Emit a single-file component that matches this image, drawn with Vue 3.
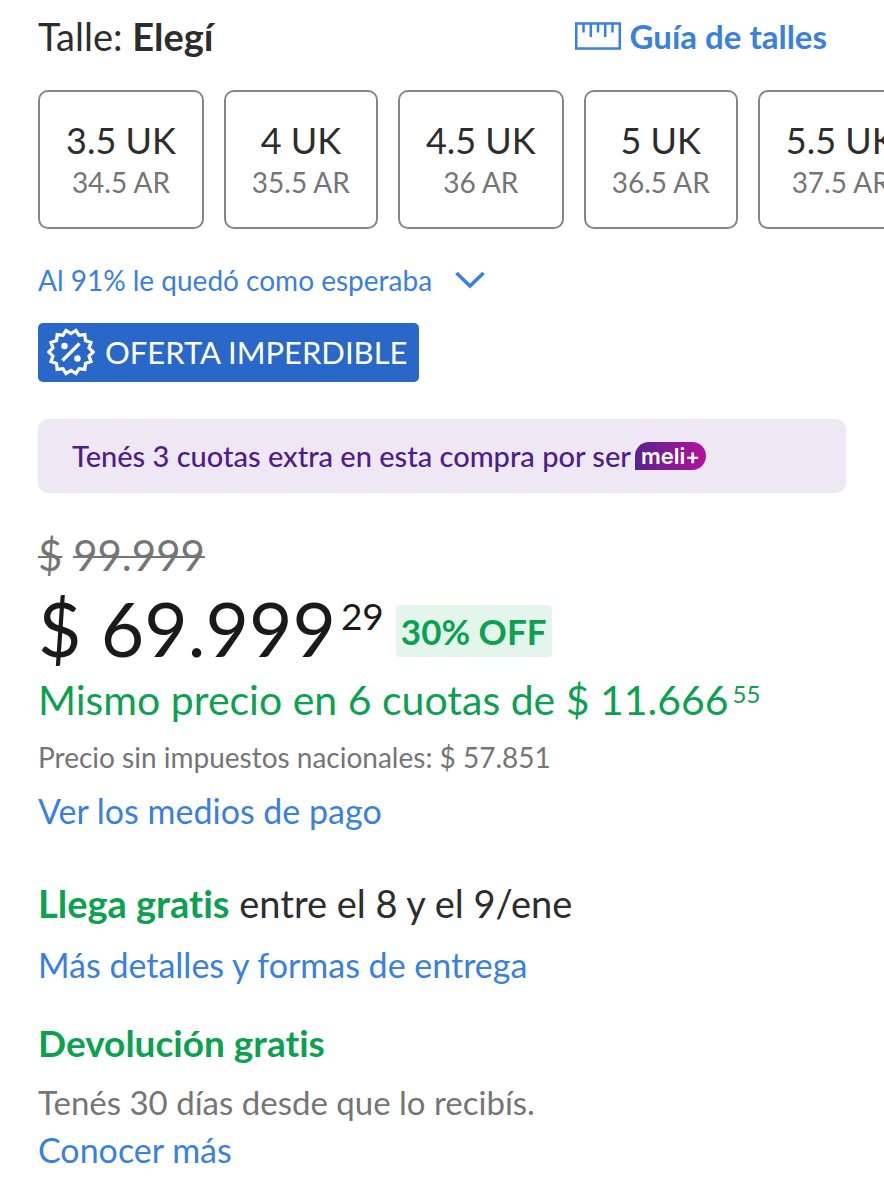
<template>
    <main class="product">
        <header class="size-header">
            <p class="size-title">Talle: <strong>Elegí</strong></p>
            <a class="guide" href="#guia">
                <svg class="guide-icon" viewBox="0 0 46 28" fill="none" stroke="currentColor" stroke-width="2.500" aria-hidden="true">
                    <rect x="1.250" y="1.500" width="43.500" height="25" />
                    <path d="M8.500 2v8.500M15.800 2v13M23 2v8.500M30.200 2v13M37.500 2v8.500" />
                </svg>
                <span>Guía de talles</span>
            </a>
        </header>

        <div class="sizes">
            <button v-for="size in sizes" :key="size.uk" type="button" class="size">
                <span class="size-uk">{{ size.uk }} UK</span>
                <span class="size-ar">{{ size.ar }} AR</span>
            </button>
        </div>

        <button type="button" class="fit">
            <span>Al 91% le quedó como esperaba</span>
            <svg class="fit-icon" viewBox="0 0 30 18" fill="none" stroke="currentColor" stroke-width="3.500" aria-hidden="true">
                <path d="M1.500 2 15 15 28.500 2" />
            </svg>
        </button>

        <div class="deal">
            <svg class="deal-icon" viewBox="0 0 48 48" fill="none" stroke="currentColor" stroke-width="3.200" aria-hidden="true">
                <polygon :points="sealPoints" />
                <path d="M15.500 32.500 32.500 15.500" />
                <circle cx="17.500" cy="18" r="3.200" fill="currentColor" stroke="none" />
                <circle cx="30.500" cy="30.500" r="3.200" fill="currentColor" stroke="none" />
            </svg>
            <span>OFERTA IMPERDIBLE</span>
        </div>

        <p class="banner">
            <span>Tenés 3 cuotas extra en esta compra por ser</span>
            <span class="meli">meli+</span>
        </p>

        <section class="prices">
            <p class="old-price"><s>$</s> <s>99.999</s></p>
            <div class="price-row">
                <p class="price">$ 69.999<span class="cents">29</span></p>
                <span class="discount">30% OFF</span>
            </div>
            <p class="installments">Mismo precio en 6 cuotas de $ 11.666<span class="cents-small">55</span></p>
            <p class="tax">Precio sin impuestos nacionales: $ 57.851</p>
            <a class="link" href="#pagos">Ver los medios de pago</a>
        </section>

        <section class="shipping">
            <p class="shipping-title"><strong>Llega gratis</strong> entre el 8 y el 9/ene</p>
            <a class="link" href="#entrega">Más detalles y formas de entrega</a>
        </section>

        <section class="returns">
            <h2 class="returns-title">Devolución gratis</h2>
            <p class="returns-text">Tenés 30 días desde que lo recibís.</p>
            <a class="link" href="#devolucion">Conocer más</a>
        </section>
    </main>
</template>

<script setup>
const sizes = [
    { uk: '3.5', ar: '34.5' },
    { uk: '4', ar: '35.5' },
    { uk: '4.5', ar: '36' },
    { uk: '5', ar: '36.5' },
    { uk: '5.5', ar: '37.5' }
];

// Seal outline: alternating inner and outer radius around the center
const spikes = 14;
const sealPoints = Array.from({ length: spikes * 2 }, (_, i) => {
    const radius = i % 2 === 0 ? 18.5 : 22.2;
    const angle = (Math.PI / spikes) * i - Math.PI / 2;
    return `${(24 + radius * Math.cos(angle)).toFixed(2)},${(24 + radius * Math.sin(angle)).toFixed(2)}`;
}).join(' ');
</script>

<style>
body {
    margin: 0;
    background: #fff;
}
</style>

<style scoped>
.product {
    box-sizing: border-box;
    padding: 12px 38px 28px;
    overflow: hidden;
    font-family: Lato, "Liberation Sans", sans-serif;
    font-variant-ligatures: none;
    color: #2d2d2d;
}

p,
h2 {
    margin: 0;
}

a {
    color: #3a80dd;
    text-decoration: none;
}

button {
    font-family: inherit;
    background: none;
    cursor: pointer;
}

/* Sizes */
.size-header {
    display: flex;
    justify-content: space-between;
    align-items: center;
    padding-right: 19px;
    font-size: 38px;
    line-height: 48px;
}

.guide {
    display: flex;
    align-items: center;
    gap: 9px;
    font-size: 33px;
    font-weight: 700;
}

.guide-icon {
    width: 46px;
    height: 28px;
}

.sizes {
    display: flex;
    gap: 20px;
    margin-top: 30px;
    margin-right: -38px;
    overflow: hidden;
}

.size {
    display: flex;
    flex-direction: column;
    align-items: center;
    flex-shrink: 0;
    padding: 24px 26px 27px;
    border: 2px solid #858585;
    border-radius: 10px;
    white-space: nowrap;
}

.size-uk {
    font-size: 36px;
    line-height: 48px;
    color: #2d2d2d;
}

.size-ar {
    font-size: 28px;
    line-height: 36px;
    color: #757575;
}

.fit {
    display: flex;
    align-items: center;
    gap: 23px;
    margin-top: 31px;
    padding: 0;
    border: none;
    font-size: 28px;
    line-height: 40px;
    color: #3a80dd;
}

.fit-icon {
    width: 30px;
    height: 18px;
}

/* Promotions */
.deal {
    display: flex;
    align-items: center;
    gap: 10px;
    width: fit-content;
    margin-top: 23px;
    padding: 5px 12px 6px 9px;
    border-radius: 5px;
    font-size: 31px;
    line-height: 48px;
    color: #fff;
    background: #2968c8;
}

.deal-icon {
    width: 48px;
    height: 48px;
}

.banner {
    display: flex;
    align-items: center;
    gap: 4px;
    margin-top: 37px;
    padding: 17px 34px;
    border-radius: 10px;
    font-size: 29px;
    font-weight: 500;
    line-height: 40px;
    color: #501c8a;
    background: #eee8f5;
}

.meli {
    padding: 0 6px;
    border-radius: 14px 14px 14px 0;
    font-family: Inter, sans-serif;
    font-size: 22px;
    font-weight: 600;
    line-height: 28px;
    color: #fff;
    background: linear-gradient(90deg, #57238f, #b4129a);
}

/* Prices */
.prices {
    margin-top: 38px;
}

.old-price {
    font-size: 42px;
    line-height: 48px;
    color: #757575;
}

.old-price s {
    text-decoration-thickness: 2px;
}

.price-row {
    display: flex;
    align-items: center;
    gap: 12px;
    margin-top: 9px;
}

.price {
    display: flex;
    font-size: 75px;
    line-height: 80px;
    color: #1a1a1a;
}

.cents {
    margin-left: 5px;
    font-size: 37px;
    line-height: 56px;
}

.discount {
    margin-top: 6px;
    padding: 6px 5px;
    border-radius: 4px;
    font-size: 35px;
    font-weight: 700;
    line-height: 40px;
    color: #0ba150;
    background: #e4f6ec;
}

.installments {
    display: flex;
    margin-top: 8px;
    font-size: 41px;
    line-height: 48px;
    color: #0ba150;
}

.cents-small {
    margin-left: 4px;
    font-size: 24px;
    line-height: 36px;
}

.tax {
    margin-top: 15px;
    font-size: 28px;
    line-height: 36px;
    color: #757575;
}

.link {
    display: block;
    width: fit-content;
    font-size: 34px;
    line-height: 40px;
}

.prices .link {
    margin-top: 16px;
}

/* Shipping and returns */
.shipping {
    margin-top: 48px;
}

.shipping-title {
    font-size: 38px;
    line-height: 48px;
}

.shipping-title strong,
.returns-title {
    font-weight: 700;
    color: #0ba150;
}

.shipping .link {
    margin-top: 18px;
}

.returns {
    margin-top: 34px;
}

.returns-title {
    font-size: 37px;
    line-height: 48px;
}

.returns-text {
    margin-top: 15px;
    font-size: 33px;
    line-height: 40px;
    color: #757575;
}

.returns .link {
    margin-top: 8px;
}
</style>
